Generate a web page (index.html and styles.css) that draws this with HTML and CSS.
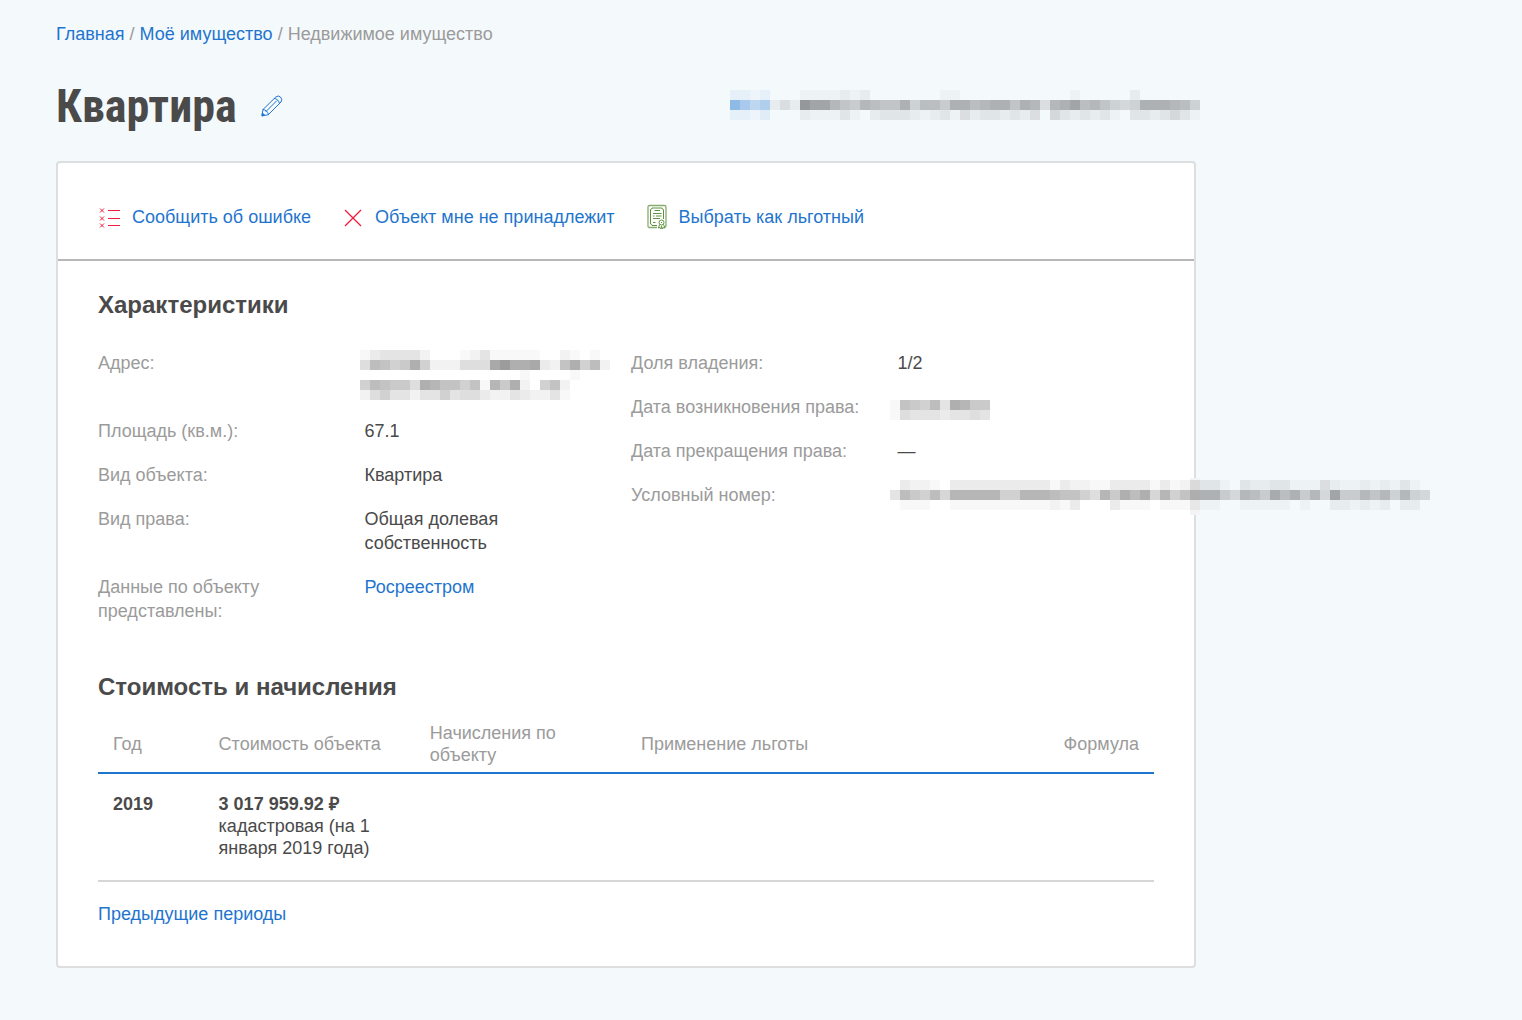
FILE: index.html
```html
<!DOCTYPE html>
<html lang="ru">
<head>
<meta charset="utf-8">
<meta name="viewport" content="width=device-width, initial-scale=1">
<title>Квартира</title>
<link rel="stylesheet" href="styles.css">
</head>
<body>
<main class="page">
  <nav class="breadcrumbs" aria-label="Навигация">
    <a href="#">Главная</a> / <a href="#">Моё имущество</a> / <span>Недвижимое имущество</span>
  </nav>

  <header class="page-header">
    <div class="title">
      <h1>Квартира</h1>
      <button class="edit" type="button" aria-label="Переименовать">
        <svg width="22" height="22" viewBox="0 0 22 22" fill="none" stroke="currentColor" stroke-width="1" stroke-linejoin="round" stroke-linecap="round">
          <path d="M1 20.500 2 14.500 14.800 2Q17.300 0 19.500 2T20 7L7.500 19.500ZM2 14.500Q6.500 15 7.500 19.500M13.500 3.500Q17.500 4 18.500 8.500M5 16.500 15.500 6"/>
          <path d="M1 20.500 1.400 18 3.500 20Z" fill="currentColor"/>
        </svg>
      </button>
    </div>
    <svg class="mosaic mosaic-owner" width="470" height="30" role="img" aria-label="Данные скрыты" data-blue="4"
      data-rows="22120001111212000000011000000000001000002000000 fb8a242fdda87a988b6997bb9abb8ba4abd9a8656bbba96 22130002111310233321231423323240532323103323531"></svg>
  </header>

  <section class="card">
    <div class="actions">
      <button class="action" type="button">
        <svg width="22" height="22" viewBox="0 0 22 22" fill="none" stroke="#ec1c3c">
          <path d="M10 4.500H22M10 12.500H22M10 19.500H22"/>
          <path d="M2 2.500 6 6.500M6 2.500 2 6.500M2 10.500 6 14.500M6 10.500 2 14.500M2 17.500 6 21.500M6 17.500 2 21.500"/>
        </svg>
        Сообщить об ошибке
      </button>
      <button class="action" type="button">
        <svg width="20" height="22" viewBox="0 0 20 22" fill="none" stroke="#ec1c3c" stroke-width="1.3">
          <path d="M2 4 18 20M18 4 2 20"/>
        </svg>
        Объект мне не принадлежит
      </button>
      <button class="action" type="button">
        <svg width="20" height="26" viewBox="0 0 20 26" fill="none" stroke="#5f9240" stroke-width="1">
          <path d="M10 23.500H2.500Q1 23.500 1 22V3Q1 1.500 2.500 1.500H17.500Q19 1.500 19 3V22L17.500 23.500" stroke="#86ad6d" stroke-width="1.300"/>
          <path d="M10 21.500H5Q5 20 3.500 20V5.500Q5 5.500 5 4H15Q15 5.500 16.500 5.500V15M7.500 6.500H13M6 9.500H14.500M6 12H7.500M9 12H14.500M6 14.500H13M6 18.500H8.500"/>
          <circle cx="14.500" cy="18.500" r="2.500"/>
          <path d="M14 18.500H15M12.500 20.500 11.500 24 13 23.500 14 25 14.500 22 15.500 25 16.500 23.500 18 24 16.500 20.500"/>
        </svg>
        Выбрать как льготный
      </button>
    </div>

    <div class="card-body">
      <h2>Характеристики</h2>
      <div class="details">
        <dl>
          <dt>Адрес:</dt>
          <dd><svg class="mosaic" width="250" height="48" role="img" aria-label="Данные скрыты" data-x="3" data-y="-1"
            data-rows="1344442000124111110021010 5a978c7222555dfccd329c7a2 0000000000000000100001000 7a9885cb99791b8c20792 257442447455322432241"></svg></dd>
          <dt>Площадь (кв.м.):</dt><dd>67.1</dd>
          <dt>Вид объекта:</dt><dd>Квартира</dd>
          <dt>Вид права:</dt><dd>Общая долевая собственность</dd>
          <dt>Данные по объекту представлены:</dt><dd><a href="#">Росреестром</a></dd>
        </dl>
        <dl>
          <dt>Доля владения:</dt><dd>1/2</dd>
          <dt>Дата возникновения права:</dt>
          <dd><svg class="mosaic" width="100" height="24" role="img" aria-label="Данные скрыты" data-y="5"
            data-rows="1987a4cb88 1544434454"></svg></dd>
          <dt>Дата прекращения права:</dt><dd>—</dd>
          <dt>Условный номер:</dt>
          <dd><svg class="mosaic" width="540" height="24" role="img" aria-label="Данные скрыты" data-y="-3"
            data-rows="032210333333333313221133331312433103223311142112121310 4a87a6bbbbb77bbba9975b8cac6b79bbb75a97c9b7a5d77a8a6a65 011100111111111121300031110111211001111101002212120220"><rect x="300" y="-5" width="10" height="37" fill="#f4f4f4"/></svg></dd>
        </dl>
      </div>

      <h2>Стоимость и начисления</h2>
      <table>
        <thead>
          <tr>
            <th class="year">Год</th>
            <th class="cost">Стоимость объекта</th>
            <th class="charge">Начисления по объекту</th>
            <th class="benefit">Применение льготы</th>
            <th class="formula">Формула</th>
          </tr>
        </thead>
        <tbody>
          <tr>
            <td><b>2019</b></td>
            <td><b>3 017 959.92 ₽</b><br>кадастровая (на 1 января 2019 года)</td>
            <td></td><td></td><td></td>
          </tr>
        </tbody>
      </table>
      <a class="previous" href="#">Предыдущие периоды</a>
    </div>
  </section>
</main>
<script src="mosaic.js"></script>
</body>
</html>
```
FILE: styles.css
```css
* { box-sizing: border-box; }

body {
  margin: 0;
  background: #f4f9fc;
  color: #4a4a4a;
  font: 18px/24px "Liberation Sans", Arial, sans-serif;
}

a { color: #1f75ce; text-decoration: none; }

button {
  padding: 0;
  border: 0;
  background: none;
  color: #1f75ce;
  font: inherit;
  cursor: pointer;
}

.page {
  max-width: 1252px;
  padding: 22px 56px 52px;
}

.breadcrumbs { color: #9b9b9b; }

.page-header {
  display: flex;
  justify-content: space-between;
  padding: 28px 0 23px;
}

.title { display: flex; gap: 24px; }

h1 {
  margin: 0;
  font: bold 46px/64px "Roboto Condensed", "Liberation Sans Narrow", "Liberation Sans", sans-serif;
}

.edit { height: 22px; margin-top: 21px; }

svg { display: block; flex: none; }

.mosaic { overflow: visible; margin-left: -8px; }
.mosaic-owner { margin: 16px -4px 0 0; }

.card {
  border: 2px solid #dcdedf;
  border-radius: 4px;
  background: #fff;
}

.actions {
  display: flex;
  flex-wrap: wrap;
  gap: 32px;
  padding: 41px 40px 29px;
  border-bottom: 2px solid #b8b8b8;
}

.action {
  display: flex;
  align-items: center;
  gap: 12px;
  height: 26px;
}

.card-body { padding: 28px 40px 40px; }

h2 { margin: 0; font-size: 24px; line-height: 32px; }

.details {
  display: grid;
  grid-template-columns: 1fr 1fr;
  gap: 10px;
  padding: 30px 0 48px;
}

dl {
  display: grid;
  grid-template-columns: 1fr 1fr;
  gap: 20px 10px;
  align-content: start;
  margin: 0;
}

dt { color: #9b9b9b; }
dd { min-width: 0; margin: 0; }

table {
  width: 100%;
  border-collapse: collapse;
  table-layout: fixed;
  margin-top: 13px;
  line-height: 22px;
  text-align: left;
}

th {
  padding: 6px 15px;
  border-bottom: 2px solid #1f75ce;
  color: #9b9b9b;
  font-weight: normal;
}

td {
  padding: 19px 15px 21px;
  border-bottom: 2px solid #d6d6d6;
  vertical-align: top;
}

.year { width: 10%; }
.cost, .charge, .formula { width: 20%; }
.formula { text-align: right; }

.previous { display: inline-block; margin-top: 20px; }
```
FILE: mosaic.js
```js
// Draws the tiles that cover private data. Each hex digit in data-rows is the
// darkness of one 10px tile; rows are separated by spaces.
const TILE = 10;

for (const svg of document.querySelectorAll(".mosaic")) {
  const left = Number(svg.dataset.x || 0);
  const top = Number(svg.dataset.y || 0);
  const blue = Number(svg.dataset.blue || 0);

  svg.dataset.rows.split(" ").forEach((row, j) => {
    [...row].forEach((digit, i) => {
      const level = parseInt(digit, 16);
      if (!level) return;
      const rect = document.createElementNS("http://www.w3.org/2000/svg", "rect");
      rect.setAttribute("x", left + i * TILE);
      rect.setAttribute("y", top + j * TILE);
      rect.setAttribute("width", TILE);
      rect.setAttribute("height", TILE);
      rect.setAttribute("fill", i < blue ? "#1f75ce" : "#000");
      rect.setAttribute("fill-opacity", level * (i < blue ? 0.032 : 0.026));
      svg.append(rect);
    });
  });
}
```
